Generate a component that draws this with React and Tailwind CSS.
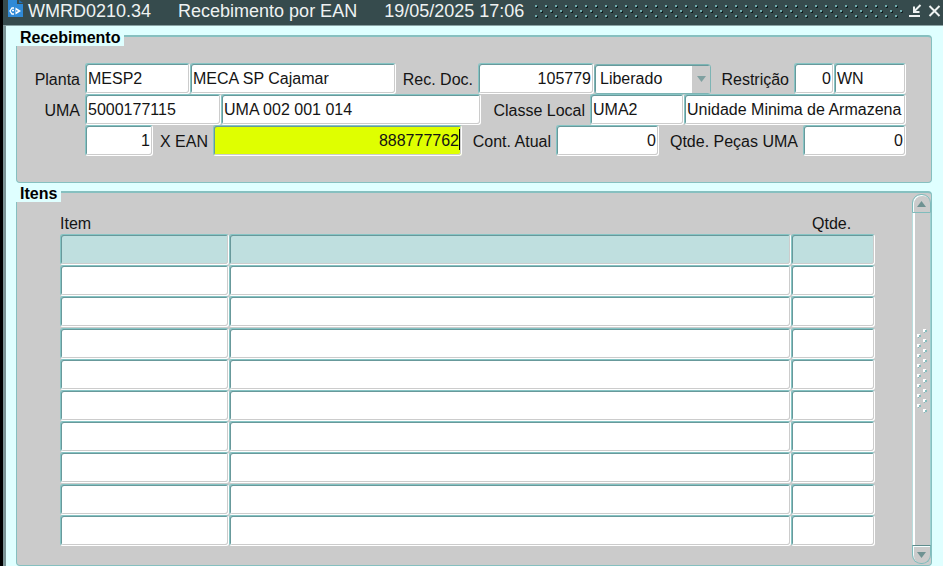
import React from "react";

const FIELD =
  "h-[31px] min-w-0 rounded-[3px] border border-t-[#86c4c4] border-l-[#86c4c4] border-r-white border-b-white px-[2px] text-[#141414] shadow-[inset_1px_1px_0_#68999b,inset_-1px_-1px_0_#cccccc] outline-none";

function Field({ className = "", tone = "bg-white", ...props }) {
  return <input type="text" className={`${FIELD} ${tone} ${className}`} {...props} />;
}

function Label({ htmlFor, className, children }) {
  return (
    <label htmlFor={htmlFor} className={`shrink-0 whitespace-nowrap pt-[3px] pr-[5px] text-right ${className}`}>
      {children}
    </label>
  );
}

function Legend({ children }) {
  return (
    <h2 className="-mt-[9px] -ml-px h-[18px] w-fit bg-[#dfffff] pr-[4px] pl-[4px] leading-[20px] font-bold text-black">
      {children}
    </h2>
  );
}

function Row({ children }) {
  return <div className="flex items-center">{children}</div>;
}

function TitleBar() {
  return (
    <header className="flex h-[25px] items-center bg-[#364b4d] text-[18px] text-[#eef2f2]">
      <svg className="mr-[4px] ml-[4px] h-[25px] w-[17px] shrink-0" viewBox="0 0 17 25" aria-hidden="true">
        <path d="M1 0h9v4h6v13H1z" fill="#2f8ad6" />
        <path d="M12 0l4 3h-4z" fill="#1f6fb5" />
        <path d="M7 8H5L3 11l2 3h2M5 10.5h2" fill="none" stroke="#fff" strokeWidth="1.3" />
        <path d="M8.5 7.5l5.5 3.5-5.5 3.5z" fill="#fff" />
        <path d="M9.8 10v2" stroke="#2f8ad6" />
      </svg>
      <h1 className="flex shrink-0 gap-[27px] whitespace-nowrap pb-[3px] leading-[22px]">
        <span>WMRD0210.34</span>
        <span>Recebimento por EAN</span>
        <span>19/05/2025 17:06</span>
      </h1>
      <svg className="mb-[4px] ml-[10px] h-[14px] min-w-0 flex-1" aria-hidden="true">
        <defs>
          <pattern id="title-grip" width="10" height="10" patternUnits="userSpaceOnUse">
            <path d="M1 1h2v2h-2zM6 6h2v2h-2z" fill="#6fa9ab" />
            <path d="M3 2h1v2h-2v-1h1zM8 7h1v2h-2v-1h1z" fill="#0d1b1c" />
          </pattern>
        </defs>
        <rect width="100%" height="14" fill="url(#title-grip)" />
      </svg>
      <button type="button" aria-label="Minimizar" className="mb-[2px] ml-[5px] h-[16px] w-[15px] shrink-0">
        <svg viewBox="0 0 15 16" className="h-[16px] w-[15px]" fill="none" stroke="#eef2f2">
          <path d="M12.500 1L6.500 7" strokeWidth="2" />
          <path d="M6 2.500v5.500h5.500" strokeWidth="2" />
          <path d="M1 12h11" strokeWidth="2" />
        </svg>
      </button>
      <button type="button" aria-label="Fechar" className="mr-[2px] mb-[4px] ml-[5px] h-[14px] w-[13px] shrink-0">
        <svg viewBox="0 0 13 14" className="h-[14px] w-[13px]" fill="none" stroke="#eef2f2" strokeWidth="2">
          <path d="M1.500 2l10 10M11.500 2l-10 10" />
        </svg>
      </button>
    </header>
  );
}

function Recebimento() {
  return (
    <section className="rounded-[4px] border border-t-2 border-[#86c0c0] bg-[#cbcbcb]">
      <Legend>Recebimento</Legend>
      <form className="mt-[17px] mr-[25px] mb-[26px]">
        <Row>
          <Label htmlFor="planta" className="w-[68px]">Planta</Label>
          <Field id="planta" className="w-[105px]" defaultValue="MESP2" />
          <Field aria-label="Descrição da planta" className="flex-1" defaultValue="MECA SP Cajamar" />
          <Label htmlFor="doc" className="w-[82px]">Rec. Doc.</Label>
          <Field id="doc" className="w-[116px] text-right" defaultValue="105779" />
          <div className="relative w-[117px] shrink-0">
            <select
              aria-label="Situação"
              disabled
              className="block h-[30px] w-full appearance-none rounded-[3px] border border-[#7db4b4] bg-white pl-[5px] text-[#141414] opacity-100 shadow-[inset_1px_1px_0_#68999b]"
            >
              <option>Liberado</option>
            </select>
            <span className="pointer-events-none absolute top-[2px] right-px flex h-[27px] w-[18px] items-center justify-center bg-[#cbcbcb]">
              <svg width="11" height="7" viewBox="0 0 11 7" aria-hidden="true">
                <path d="M1 0h9L5.500 6z" fill="#7fa0a0" />
              </svg>
            </span>
          </div>
          <Label htmlFor="restricao" className="w-[83px]">Restrição</Label>
          <Field id="restricao" className="w-[40px] text-right" defaultValue="0" />
          <Field aria-label="Tipo de restrição" className="w-[72px]" defaultValue="WN" />
        </Row>
        <Row>
          <Label htmlFor="uma" className="w-[68px]">UMA</Label>
          <Field id="uma" className="w-[136px]" defaultValue="5000177115" />
          <Field aria-label="Descrição da UMA" className="flex-1" defaultValue="UMA 002 001 014" />
          <Label htmlFor="classe" className="w-[109px]">Classe Local</Label>
          <Field id="classe" className="w-[94px]" defaultValue="UMA2" />
          <Field aria-label="Descrição da classe" className="w-[222px]" defaultValue="Unidade Minima de Armazena" />
        </Row>
        <Row>
          <Field aria-label="Multiplicador" className="ml-[68px] w-[68px] text-right" defaultValue="1" />
          <Label htmlFor="ean" className="w-[60px]">X EAN</Label>
          <div className="relative flex min-w-0 flex-1">
            <Field id="ean" className="w-full text-right" tone="bg-[#dfff00]" defaultValue="888777762" />
            <span className="absolute top-[4px] right-[2px] h-[21px] w-px bg-black" />
          </div>
          <Label htmlFor="cont" className="w-[94px]">Cont. Atual</Label>
          <Field id="cont" className="w-[103px] text-right" defaultValue="0" />
          <Label htmlFor="pecas" className="w-[144px]">Qtde. Peças UMA</Label>
          <Field id="pecas" className="w-[103px] text-right" defaultValue="0" />
        </Row>
      </form>
    </section>
  );
}

const GRIP = [0, 1, 2, 3, 4, 5, 6, 7, 8, 9, 10, 11, 12, 13, 14, 15, 16];

function ScrollBar() {
  return (
    <div className="mt-px mb-px flex w-[19px] shrink-0 flex-col">
      <button
        type="button"
        aria-label="Rolar para cima"
        className="flex h-[19px] items-center justify-center rounded-t-[9px] border border-[#7fbcbc] bg-[#cbcbcb] shadow-[inset_1px_1px_0_#f4ffff]"
      >
        <svg width="9" height="6" viewBox="0 0 9 6" aria-hidden="true">
          <path d="M4.500 0L9 6H0z" fill="#6f9292" />
        </svg>
      </button>
      <div className="flex flex-1 items-center justify-center border-r border-l border-r-[#9fd0d0] border-l-[#b9dede] bg-[#cbcbcb] pb-[16px] shadow-[inset_2px_0_0_#ffffff]">
        <svg width="13" height="86" viewBox="0 0 13 86" aria-hidden="true">
          {GRIP.map((i) => (
            <g key={i} transform={`translate(${i % 2 ? 2 : 8} ${1 + i * 5})`}>
              <path d="M1 1h3v2H2v1H1z" fill="#85bcbc" />
              <path d="M0 0h3v1H2v2H0z" fill="#ffffff" />
            </g>
          ))}
        </svg>
      </div>
      <button
        type="button"
        aria-label="Rolar para baixo"
        className="flex h-[19px] items-center justify-center rounded-b-[9px] border border-[#7fbcbc] border-t-[#5f8c8c] bg-[#cbcbcb] shadow-[inset_1px_1px_0_#f4ffff]"
      >
        <svg width="9" height="6" viewBox="0 0 9 6" aria-hidden="true">
          <path d="M0 0h9L4.500 6z" fill="#6f9292" />
        </svg>
      </button>
    </div>
  );
}

const ITEMS = [1, 2, 3, 4, 5, 6, 7, 8, 9, 10];

function Itens() {
  return (
    <section className="flex flex-1 rounded-[4px] border border-t-2 border-[#86c0c0] bg-[#cbcbcb]">
      <div className="min-w-0 flex-1">
        <Legend>Itens</Legend>
        <div className="mt-[12px] mr-[37px] ml-[43px]">
          <table className="h-[332px] w-full table-fixed border-collapse">
            <thead>
              <tr className="h-[20px] text-left">
                <th scope="col" className="h-[20px] w-[169px] p-0 leading-[20px] font-normal">Item</th>
                <th scope="col" aria-label="Descrição" className="p-0" />
                <th scope="col" className="w-[84px] p-0 pl-[21px] leading-[20px] font-normal">Qtde.</th>
              </tr>
            </thead>
            <tbody>
              {ITEMS.map((n) => {
                const tone = n === 1 ? "bg-[#bfdfdf]" : "bg-white";
                return (
                  <tr key={n}>
                    <td className="p-0">
                      <Field aria-label={`Item ${n}`} className="block w-full" tone={tone} />
                    </td>
                    <td className="p-0">
                      <Field aria-label={`Descrição ${n}`} className="block w-full" tone={tone} />
                    </td>
                    <td className="p-0">
                      <Field aria-label={`Quantidade ${n}`} className="block w-full" tone={tone} />
                    </td>
                  </tr>
                );
              })}
            </tbody>
          </table>
        </div>
      </div>
      <ScrollBar />
    </section>
  );
}

export default function App() {
  return (
    <div className="flex min-h-screen bg-black pl-[3px] font-['Liberation_Sans',Arial,sans-serif] text-[16px] text-[#141414]">
      <div className="flex min-w-0 flex-1 flex-col">
        <TitleBar />
        <main className="flex flex-1 flex-col gap-[8px] border-t border-l-[3px] border-t-[#8aa3a4] border-l-[#7b9496] bg-[#dfffff] pt-[9px] pr-[11px] pl-[10px]">
          <Recebimento />
          <Itens />
        </main>
      </div>
    </div>
  );
}
